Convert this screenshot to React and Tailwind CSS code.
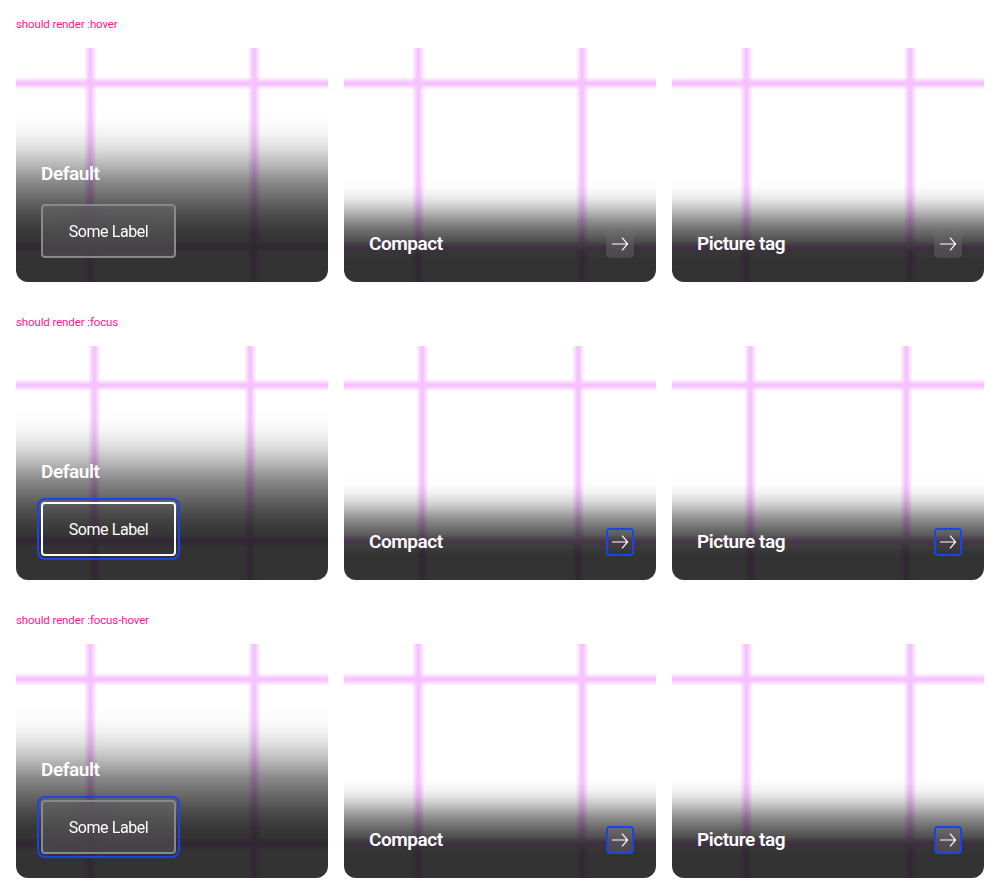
const GRID =
  "bg-[linear-gradient(to_right,transparent_72px,#f6c1ff_77.5px,#f6c1ff_79px,transparent_84.5px,transparent_228px,#f6c1ff_233.5px,#f6c1ff_235px,transparent_240.5px),linear-gradient(to_bottom,transparent_33px,#f6c1ff_38.5px,#f6c1ff_40px,transparent_45.5px,transparent_189px,#f6c1ff_194.5px,#f6c1ff_196px,transparent_201.5px)]";

const SHADE =
  "bg-[linear-gradient(to_top,rgba(0,0,0,0.8)_0%,rgba(0,0,0,0.8)_8.1%,rgba(0,0,0,0.8)_15.5%,rgba(0,0,0,0.8)_22.5%,rgba(0,0,0,0.78)_29%,rgba(0,0,0,0.73)_35.3%,rgba(0,0,0,0.67)_41.2%,rgba(0,0,0,0.6)_47.1%,rgba(0,0,0,0.52)_52.9%,rgba(0,0,0,0.44)_58.8%,rgba(0,0,0,0.33)_64.7%,rgba(0,0,0,0.22)_71%,rgba(0,0,0,0.12)_77.5%,rgba(0,0,0,0.05)_84.5%,rgba(0,0,0,0.011)_91.9%,rgba(0,0,0,0)_100%)]";

function Arrow() {
  return (
    <svg viewBox="0 0 24 24" className="size-6" fill="none" stroke="#fff" strokeWidth="1.15">
      <path d="M4 12h15.5M14 5.7l5.6 6.3L14 18.3" />
    </svg>
  );
}

function Title({ children }) {
  return <h2 className="text-[19px] leading-7 font-semibold tracking-[-0.45px]">{children}</h2>;
}

function Tile({ title, compact, hover, focus }) {
  return (
    <article className="grid h-[234px] overflow-hidden rounded-xl [&>*]:col-start-1 [&>*]:row-start-1">
      <div className={`${GRID} ${hover ? "scale-105" : ""}`} />
      <div className={`${SHADE} z-10 self-end px-[25px] pt-[52px] pb-6 text-white`}>
        {compact ? (
          <div className="flex items-center justify-between">
            <Title>{title}</Title>
            <button
              aria-label="Some Label"
              className={`-mr-[3px] flex size-7 items-center justify-center rounded ${hover ? "bg-[#949598]/20 backdrop-blur-md" : ""} ${focus ? "border-2 border-[#1a44ea]" : ""}`}
            >
              <span className="shrink-0">
                <Arrow />
              </span>
            </button>
          </div>
        ) : (
          <div className="flex flex-col items-start gap-4">
            <Title>{title}</Title>
            <button
              className={`h-[54px] w-[135px] rounded border-2 pt-0.5 text-[16px] whitespace-nowrap tracking-[-0.42px] ${hover ? "border-[#88898c] bg-[#949598]/20 backdrop-blur-md" : "border-white"} ${focus ? "outline-2 outline-offset-2 outline-[#1a44ea]" : ""}`}
            >
              Some Label
            </button>
          </div>
        )}
      </div>
    </article>
  );
}

const STATES = [
  { name: "hover", hover: true, focus: false },
  { name: "focus", hover: false, focus: true },
  { name: "focus-hover", hover: true, focus: true },
];

export default function App() {
  return (
    <main className="h-[894px] overflow-hidden bg-white px-4 font-['Roboto',sans-serif]">
      {STATES.map(({ name, hover, focus }) => (
        <section key={name} className="h-[298px] pt-4">
          <p className="mb-4 text-[11.5px] leading-4 tracking-[-0.12px] text-[#ff1493]">should render :{name}</p>
          <div className="grid grid-cols-3 gap-4">
            <Tile title="Default" hover={hover} focus={focus} />
            <Tile title="Compact" compact hover={hover} focus={focus} />
            <Tile title="Picture tag" compact hover={hover} focus={focus} />
          </div>
        </section>
      ))}
    </main>
  );
}
